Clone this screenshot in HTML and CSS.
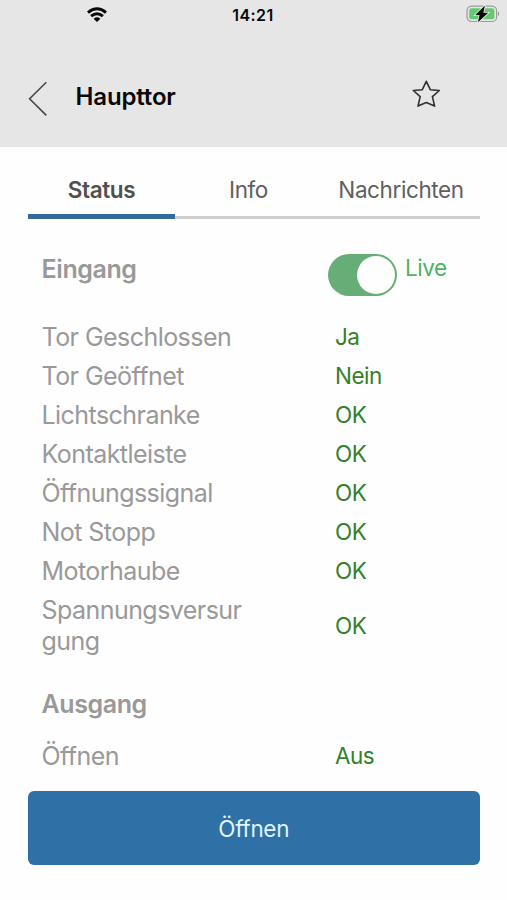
FILE: index.html
```html
<!DOCTYPE html>
<html lang="de">
<head>
<meta charset="utf-8">
<title>Haupttor</title>
<link rel="stylesheet" href="styles.css">
</head>
<body>
<header class="header">
  <div class="statusbar">
    <svg class="wifi" viewBox="0 0 20 16" width="20" height="16">
      <g fill="none" stroke="#080808" stroke-width="3">
        <path d="M1 5.6Q10-2 19 5.6"/>
        <path d="M4.1 9.2Q10 4.2 15.9 9.2"/>
      </g>
      <path d="M6.6 11.7Q10 9 13.4 11.7L10 15z" fill="#080808"/>
    </svg>
    <span class="clock">14:21</span>
    <svg class="battery" viewBox="0 0 34 18" width="34" height="18">
      <rect x="1" y="1.1" width="29.6" height="15.4" rx="4.6" fill="#e6e6e6" stroke="#9b9b9b" stroke-width="1.2"/>
      <rect x="3.2" y="3.3" width="25.2" height="11" rx="2.4" fill="#65c971"/>
      <path d="M32 6.5q2.2 2.2 0 4.6z" fill="#8f8f8f"/>
      <path d="M18.4 1.4L9.8 9.8h4.2l-1.6 6.8L21.5 8h-4.6z" fill="#080808" stroke="#e2f1e3" stroke-width="2.2" paint-order="stroke"/>
      <path d="M18.4 1.4L9.8 9.8h4.2l-1.6 6.8L21.5 8h-4.6z" fill="#080808" stroke="#080808" stroke-width=".5"/>
    </svg>
  </div>
  <div class="titlebar">
    <svg class="back" viewBox="0 0 20 36" width="20" height="36"><path d="M18.3 1.2L1.6 17.8 18.3 34.4" fill="none" stroke="#484848" stroke-width="1.6"/></svg>
    <h1 class="title">Haupttor</h1>
    <svg class="star" viewBox="0 0 28 28" width="28" height="28"><path d="M14.3 1.3l4 8.4 9 .8-6.9 6.1 2.2 9.5-8.3-3.6L6 26.100l2.200-9.500-6.900-6.100 9-.800z" fill="none" stroke="#303030" stroke-width="1.6" stroke-linejoin="round"/></svg>
  </div>
</header>
<nav class="tabs">
  <a class="tab active">Status</a>
  <a class="tab">Info</a>
  <a class="tab">Nachrichten</a>
</nav>
<main class="content">
  <div class="section-head">
    <h2 class="heading">Eingang</h2>
    <div class="live"><span class="switch"><span class="knob"></span></span><span class="live-label">Live</span></div>
  </div>
  <div class="row"><span class="label">Tor Geschlossen</span><span class="value">Ja</span></div>
  <div class="row"><span class="label">Tor Geöffnet</span><span class="value">Nein</span></div>
  <div class="row"><span class="label">Lichtschranke</span><span class="value">OK</span></div>
  <div class="row"><span class="label">Kontaktleiste</span><span class="value">OK</span></div>
  <div class="row"><span class="label">Öffnungssignal</span><span class="value">OK</span></div>
  <div class="row"><span class="label">Not Stopp</span><span class="value">OK</span></div>
  <div class="row"><span class="label">Motorhaube</span><span class="value">OK</span></div>
  <div class="row"><span class="label">Spannungsversur<br>gung</span><span class="value">OK</span></div>
  <h2 class="heading output">Ausgang</h2>
  <div class="row"><span class="label">Öffnen</span><span class="value">Aus</span></div>
</main>
<button class="action">Öffnen</button>
</body>
</html>
```
FILE: styles.css
```css
* { box-sizing: border-box; }
body {
  margin: 0;
  height: 900px;
  overflow: hidden;
  background: #fefefe;
  font-family: Inter, "Liberation Sans", sans-serif;
  font-feature-settings: "calt" 0, "liga" 0;
}
.header { height: 147px; background: #e6e6e6; }
.statusbar {
  display: grid;
  grid-template-columns: 1fr auto 1fr;
  align-items: center;
  height: 29px;
  padding: 0 7px 0 6px;
}
.wifi { margin-left: 81px; }
.clock { font-size: 16px; font-weight: 600; letter-spacing: 0.4px; color: #080808; }
.battery { justify-self: end; margin-top: -1px; }
.titlebar { display: flex; align-items: center; height: 138px; margin-top: -1px; padding: 0 67px 0 28px; }
.back { margin-top: 3px; }
.title { margin: -2px auto 0 27.5px; font-size: 24px; font-weight: 600; letter-spacing: -0.15px; color: #080808; }
.star { margin-top: -7px; }
.tabs {
  display: grid;
  grid-template-columns: 147px 147px 158px;
  height: 72px;
  margin: 0 27px 0 28px;
  box-shadow: inset 0 -3px #cecece;
}
.tab {
  padding-top: 28px;
  line-height: 30px;
  font-size: 22.5px;
  letter-spacing: -0.4px;
  text-align: center;
  color: #606060;
}
.active { font-weight: 600; color: #505050; border-bottom: 5.5px solid #36699b; }
.content { height: 572px; padding: 30px 27px 0 41.5px; }
.section-head { display: flex; height: 68px; }
.heading { width: 286px; margin: 5px 0 0; line-height: 30px; font-size: 25px; font-weight: 600; letter-spacing: -0.4px; color: #999; }
.live { display: flex; }
.switch { display: flex; justify-content: flex-end; width: 69px; height: 42px; margin-top: 5px; padding: 2px; border-radius: 21px; background: #66ad78; }
.knob { width: 38px; height: 38px; border-radius: 50%; background: #fefefe; }
.live-label { margin: 4px 0 0 8.5px; line-height: 30px; font-size: 22.5px; letter-spacing: -0.5px; color: #4db45c; }
.row { display: grid; grid-template-columns: 293.5px 1fr; align-items: center; padding: 4.7px 0 3.9px; }
.label { line-height: 30.5px; font-size: 25px; letter-spacing: -0.55px; color: #999; }
.value { margin-top: -0.4px; line-height: 28px; font-size: 22.5px; letter-spacing: -0.5px; color: #35802a; }
.output { margin: 28.5px 0 17.8px; }
.action {
  display: block;
  width: 452.5px;
  height: 74px;
  margin: 0 0 0 27.5px;
  padding: 0;
  border: 0;
  border-radius: 6px;
  background: #2f71a6;
  color: #dff5ff;
  font: 22.5px Inter, "Liberation Sans", sans-serif;
  letter-spacing: -0.3px;
}
```
